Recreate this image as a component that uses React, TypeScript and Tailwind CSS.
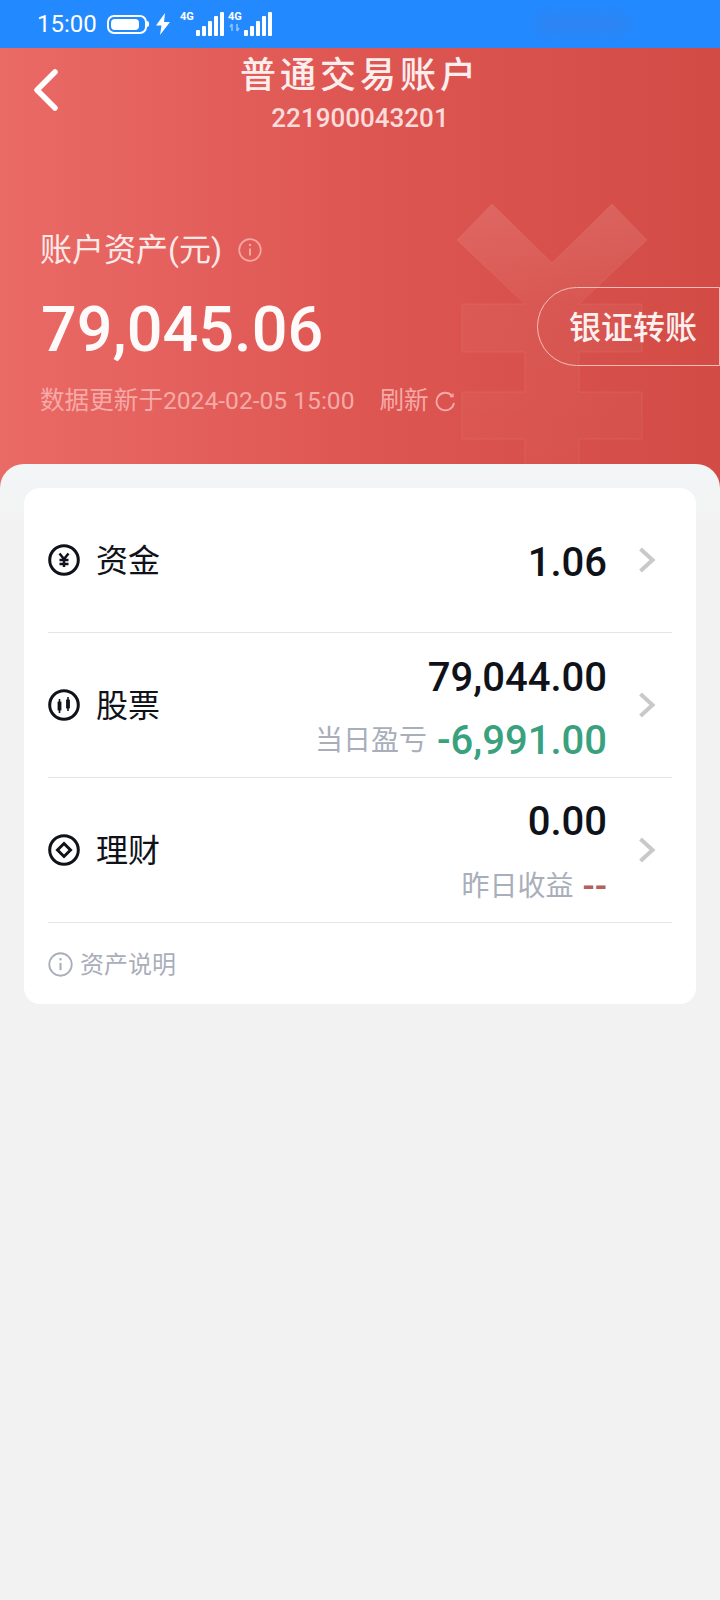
const cjk = "font-['Roboto','Noto_Sans_CJK_SC',sans-serif]";

const Signal = ({ arrows }: { arrows?: boolean }) => (
  <svg width="44" height="26" viewBox="0 0 44 26" fill="none">
    <text x="0" y="9" fontSize="11" fontWeight="700" fill="#fff" fontFamily="Roboto, sans-serif">4G</text>
    {arrows && <path d="M4 20v-7M4 13l-2 3M9 13v7M9 20l2-3" stroke="#8fc2ff" strokeWidth="1.6" />}
    <rect x="16" y="19" width="4" height="6" rx="1" fill="#fff" />
    <rect x="22" y="15" width="4" height="10" rx="1" fill="#fff" />
    <rect x="28" y="10" width="4" height="15" rx="1" fill="#fff" />
    <rect x="34" y="5" width="4" height="20" rx="1" fill="#fff" />
    <rect x="40" y="1" width="4" height="24" rx="1" fill="#fff" />
  </svg>
);

const CoinIcon = () => (
  <svg width="32" height="32" viewBox="0 0 32 32" fill="none" stroke="#10121a" strokeWidth="3">
    <circle cx="16" cy="16" r="14.3" />
    <path d="M11.5 9.5 16 15l4.5-5.5M11.5 16h9M11.5 20h9M16 15v8" strokeWidth="2.5" />
  </svg>
);

const StockIcon = () => (
  <svg width="32" height="32" viewBox="0 0 32 32" fill="none" stroke="#10121a" strokeWidth="3">
    <circle cx="16" cy="16" r="14.3" />
    <path d="M11.5 10v14M20 8v14" strokeWidth="1.6" />
    <rect x="10" y="13" width="3" height="8" fill="#10121a" strokeWidth="0.8" />
    <rect x="18.5" y="11" width="3" height="8" fill="#10121a" strokeWidth="0.8" />
  </svg>
);

const WealthIcon = () => (
  <svg width="32" height="32" viewBox="0 0 32 32" fill="none" stroke="#10121a" strokeWidth="3">
    <circle cx="16" cy="16" r="14.3" />
    <path d="M16 9.5l6.5 6.5-6.5 6.5L9.5 16z" />
  </svg>
);

const Chevron = () => (
  <svg width="18" height="26" viewBox="0 0 18 26" fill="none" stroke="#c9c9c9" strokeWidth="4">
    <path d="M2.5 2l12 11-12 11" />
  </svg>
);

const InfoIcon = ({ color, size }: { color: string; size: number }) => (
  <svg width={size} height={size} viewBox="0 0 24 24" fill="none" stroke={color} strokeWidth="1.7">
    <circle cx="12" cy="12" r="10.8" />
    <path d="M12 10.5v7" strokeWidth="2" />
    <circle cx="12" cy="7" r="0.6" strokeWidth="1.2" />
  </svg>
);

const rows = [
  { name: "资金", icon: <CoinIcon />, value: "1.06", shift: "translate-y-[3px]", gap: "" },
  { name: "股票", icon: <StockIcon />, value: "79,044.00", shift: "translate-y-[4px]", gap: "mt-[17px] gap-[10px]", sub: "当日盈亏", subValue: "-6,991.00", subColor: "text-[40px] text-[#3aa17e]" },
  { name: "理财", icon: <WealthIcon />, value: "0.00", shift: "translate-y-[4px]", gap: "mt-[19px] gap-[9px]", sub: "昨日收益", subValue: "--", subColor: "text-[36px] text-[#b5605c]" },
];

export default function App() {
  return (
    <div className={`min-h-[1600px] w-[720px] overflow-hidden bg-[#f2f2f2] ${cjk}`}>
      {/* status bar */}
      <div className="flex h-12 items-center bg-[#2389ff] pl-[37px] text-white">
        <span className="text-[24px] leading-none">15:00</span>
        <div className="ml-[10px] flex items-center">
          <div className="flex h-[19px] w-[40px] items-center rounded-[7px] border-2 border-white p-[2px]">
            <div className="h-full w-[28px] rounded-[4px] bg-white" />
          </div>
          <div className="h-[6px] w-[2px] rounded-r bg-white" />
        </div>
        <svg className="ml-[6px]" width="16" height="22" viewBox="0 0 16 22" fill="#fff">
          <path d="M10 0 1 12.5h5.5L5 22l10-13H9z" />
        </svg>
        <div className="ml-[9px] flex gap-[4px]">
          <Signal />
          <Signal arrows />
        </div>
        <div className="ml-[262px] h-[22px] w-[96px] rounded-full bg-[#3b7fe0] opacity-40 blur-[6px]" />
      </div>

      {/* header */}
      <div className="relative h-[448px] overflow-hidden bg-gradient-to-r from-[#ea6a66] via-[#de5652] to-[#d24b45] text-white">
        <svg className="absolute left-[457px] top-[156px]" width="190" height="292" viewBox="0 0 190 292">
          <defs>
            <linearGradient id="yuan" x1="0" y1="0" x2="0" y2="1">
              <stop offset="0" stopColor="#fff" stopOpacity="0.12" />
              <stop offset="0.35" stopColor="#fff" stopOpacity="0.04" />
              <stop offset="1" stopColor="#fff" stopOpacity="0.015" />
            </linearGradient>
          </defs>
          <path
            d="M35 0 95 59 155 0 190 36 122 100H185V148H122V188H185V235H122V292H68V235H5V188H68V148H5V100H68L0 36z"
            fill="url(#yuan)"
            stroke="#fff"
            strokeOpacity="0.07"
          />
        </svg>

        <div className="relative grid grid-cols-[1fr_auto_1fr] pt-[6px]">
          <div className="pl-[33px] pt-[15px]">
            <svg width="26" height="42" viewBox="0 0 26 42" fill="none" stroke="#fff" strokeWidth="5.5" strokeLinecap="round" strokeLinejoin="round">
              <path d="M22 3 4 21l18 18" />
            </svg>
          </div>
          <div className="flex flex-col items-center">
            <div className="text-[36px] font-medium leading-[44px] tracking-[4px] text-[#fdeeee]">普通交易账户</div>
            <div className="mt-[5px] text-[26px] font-medium leading-[30px] text-[#fbdcdb]">221900043201</div>
          </div>
        </div>

        <div className="relative mt-[97px] flex h-10 items-center gap-4 pl-10">
          <span className="text-[32px] leading-10 text-[#fde9e8]">账户资产(元)</span>
          <InfoIcon color="#f7a8a4" size={24} />
        </div>

        <div className="relative mt-4 flex h-[80px] items-center justify-between pl-[41px]">
          <span className="pt-[7px] text-[63px] font-medium leading-none text-[#fffafa]">79,045.06</span>
          <button className="flex h-[79px] w-[183px] items-center rounded-l-full border border-[#f7bcb9] pl-[31px] pt-[3px] text-[32px] font-medium text-[#fdf0ef]">
            银证转账
          </button>
        </div>

        <div className="relative mt-[19px] flex h-8 items-center pl-10 text-[24.6px] leading-8 text-[#f6aaa7]">
          <span>数据更新于2024-02-05 15:00</span>
          <span className="ml-[25px]">刷新</span>
          <svg className="ml-[6px]" width="21" height="21" viewBox="0 0 21 21" fill="none" stroke="#f6aaa7" strokeWidth="1.8">
            <path d="M17 4.8A8.8 8.8 0 1 0 19 12" />
            <path d="M18 2.5V5.5H15" strokeWidth="1.4" />
          </svg>
        </div>
      </div>

      {/* sheet */}
      <div className="relative z-10 -mt-8 rounded-t-[24px] bg-gradient-to-b from-[#f3f6f7] to-[#f2f2f2] to-[60px] px-6 pt-6">
        <div className="rounded-[16px] bg-white px-6">
          {rows.map((r) => (
            <div key={r.name} className="flex h-[145px] items-center border-b border-[#e3e5e8]">
              {r.icon}
              <span className="ml-[16px] pt-[2px] text-[32px] text-[#10121a]">{r.name}</span>
              <div className={`ml-auto flex flex-col items-end ${r.shift}`}>
                <span className="text-[40px] font-medium leading-[46px] text-[#10121a]">{r.value}</span>
                {r.sub && (
                  <div className={`flex h-[46px] items-center ${r.gap}`}>
                    <span className="text-[28px] text-[#a9aebb]">{r.sub}</span>
                    <span className={`font-medium leading-[46px] ${r.subColor}`}>{r.subValue}</span>
                  </div>
                )}
              </div>
              <div className="ml-[31px] mr-4">
                <Chevron />
              </div>
            </div>
          ))}
          <div className="flex h-[81px] items-center gap-[7px] pt-[2px]">
            <InfoIcon color="#a9aebb" size={25} />
            <span className="text-[24px] text-[#a9aebb]">资产说明</span>
          </div>
        </div>
      </div>
    </div>
  );
}
